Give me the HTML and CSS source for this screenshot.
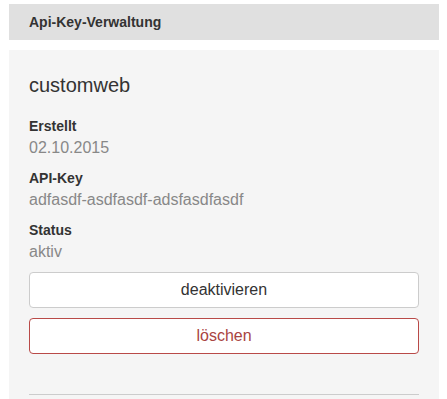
FILE: index.html
```html
<!DOCTYPE html>
<html lang="de">
<head>
  <meta charset="UTF-8">
  <title>Api-Key-Verwaltung</title>
  <link rel="stylesheet" href="styles.css">
</head>
<body>

  <header class="page-title">Api-Key-Verwaltung</header>

  <div class="key-panel">
    <h3 class="key-name">customweb</h3>

    <div class="field">
      <div class="field-label">Erstellt</div>
      <div class="field-value">02.10.2015</div>
    </div>

    <div class="field">
      <div class="field-label">API-Key</div>
      <div class="field-value">adfasdf-asdfasdf-adsfasdfasdf</div>
    </div>

    <div class="field">
      <div class="field-label">Status</div>
      <div class="field-value">aktiv</div>
    </div>

    <div class="actions">
      <button class="btn">deaktivieren</button>
      <button class="btn btn-danger">löschen</button>
    </div>

    <hr class="divider">
  </div>

</body>
</html>
```

FILE: styles.css
```css
body {
  margin: 4px 8px 0 9px;
  font-family: "Liberation Sans", Arial, sans-serif;
  color: #333;
  background: #fff;
}

.page-title {
  background-color: #e0e0e0;
  height: 36px;
  line-height: 36px;
  padding: 0 20px;
  font-size: 14px;
  font-weight: bold;
  color: #333;
}

.key-panel {
  margin-top: 10px;
  background-color: #f5f5f5;
  padding: 20px 20px 40px;
}

.key-name {
  margin: 4px 0 20px;
  font-size: 20px;
  line-height: 22px;
  font-weight: normal;
  color: #333;
}

.field {
  margin-bottom: 8px;
}

.field-label {
  font-size: 14px;
  line-height: 20px;
  font-weight: bold;
  color: #333;
}

.field-value {
  font-size: 16px;
  line-height: 24px;
  color: #888;
}

.actions {
  margin-top: 3px;
  display: flex;
  flex-direction: column;
  gap: 10px;
}

.btn {
  display: block;
  width: 100%;
  padding: 6px 12px;
  font-family: inherit;
  font-size: 16px;
  line-height: 22px;
  color: #333;
  background: #fff;
  border: 1px solid #ccc;
  border-radius: 4px;
  cursor: pointer;
}

.btn-danger {
  color: #a94442;
  border-color: #b94a48;
}

.divider {
  margin: 40px 0 0;
  border: none;
  border-top: 1px solid #ccc;
}
```
